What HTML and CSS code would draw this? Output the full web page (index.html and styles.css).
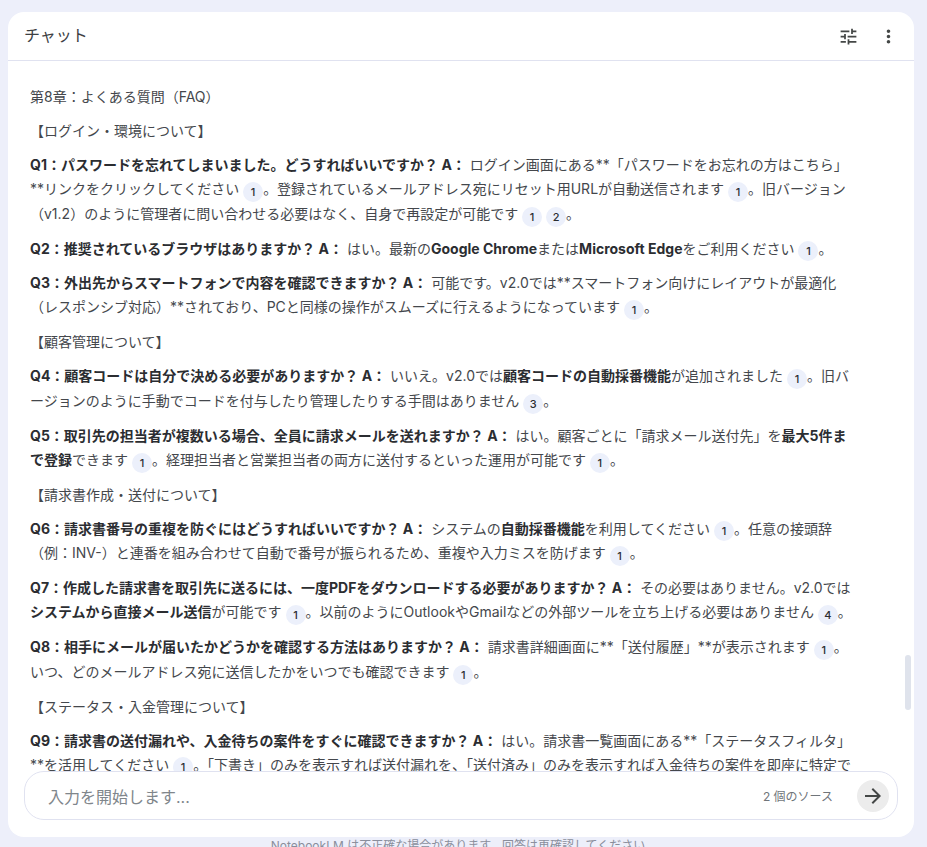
FILE: index.html
```html
<!DOCTYPE html>
<html lang="ja">
<head>
<meta charset="utf-8">
<title>チャット</title>
<link rel="stylesheet" href="styles.css">
</head>
<body>
<main class="card">
  <header class="head">
    <h1 class="title">チャット</h1>
    <div class="tools">
      <svg class="icon" viewBox="0 0 24 24"><path d="M3 17v2h6v-2H3zM3 5v2h10V5H3zm10 16v-2h8v-2h-8v-2h-2v6h2zM7 9v2H3v2h4v2h2V9H7zm14 4v-2H11v2h10zm-6-4h2V7h4V5h-4V3h-2v6z"/></svg>
      <svg class="icon" viewBox="0 0 24 24"><path d="M12 8c1.100 0 2-.9 2-2s-.9-2-2-2-2 .9-2 2 .9 2 2 2zm0 2c-1.100 0-2 .9-2 2s.9 2 2 2 2-.9 2-2-.9-2-2-2zm0 6c-1.100 0-2 .9-2 2s.9 2 2 2 2-.9 2-2-.9-2-2-2z"/></svg>
    </div>
  </header>
  <section class="scroll">
    <div class="thumb"></div>
    <p>第8章：よくある質問（FAQ）</p>
    <p>【ログイン・環境について】</p>
    <p><b>Q1：パスワードを忘れてしまいました。どうすればいいですか？ A：</b> ログイン画面にある**「パスワードをお忘れの方はこちら」**リンクをクリックしてください <span class="cite">1</span>。登録されているメールアドレス宛にリセット用URLが自動送信されます <span class="cite">1</span>。旧バージョン（v1.2）のように管理者に問い合わせる必要はなく、自身で再設定が可能です <span class="cite">1</span> <span class="cite">2</span>。</p>
    <p><b>Q2：推奨されているブラウザはありますか？ A：</b> はい。最新の<b>Google Chrome</b>または<b>Microsoft Edge</b>をご利用ください <span class="cite">1</span>。</p>
    <p><b>Q3：外出先からスマートフォンで内容を確認できますか？ A：</b> 可能です。v2.0では**スマートフォン向けにレイアウトが最適化（レスポンシブ対応）**されており、PCと同様の操作がスムーズに行えるようになっています <span class="cite">1</span>。</p>
    <p>【顧客管理について】</p>
    <p><b>Q4：顧客コードは自分で決める必要がありますか？ A：</b> いいえ。v2.0では<b>顧客コードの自動採番機能</b>が追加されました <span class="cite">1</span>。旧バージョンのように手動でコードを付与したり管理したりする手間はありません <span class="cite">3</span>。</p>
    <p><b>Q5：取引先の担当者が複数いる場合、全員に請求メールを送れますか？ A：</b> はい。顧客ごとに「請求メール送付先」を<b>最大5件まで登録</b>できます <span class="cite">1</span>。経理担当者と営業担当者の両方に送付するといった運用が可能です <span class="cite">1</span>。</p>
    <p>【請求書作成・送付について】</p>
    <p><b>Q6：請求書番号の重複を防ぐにはどうすればいいですか？ A：</b> システムの<b>自動採番機能</b>を利用してください <span class="cite">1</span>。任意の接頭辞（例：INV-）と連番を組み合わせて自動で番号が振られるため、重複や入力ミスを防げます <span class="cite">1</span>。</p>
    <p><b>Q7：作成した請求書を取引先に送るには、一度PDFをダウンロードする必要がありますか？ A：</b> その必要はありません。v2.0では<b>システムから直接メール送信</b>が可能です <span class="cite">1</span>。以前のようにOutlookやGmailなどの外部ツールを立ち上げる必要はありません <span class="cite">4</span>。</p>
    <p><b>Q8：相手にメールが届いたかどうかを確認する方法はありますか？ A：</b> 請求書詳細画面に**「送付履歴」**が表示されます <span class="cite">1</span>。いつ、どのメールアドレス宛に送信したかをいつでも確認できます <span class="cite">1</span>。</p>
    <p>【ステータス・入金管理について】</p>
    <p><b>Q9：請求書の送付漏れや、入金待ちの案件をすぐに確認できますか？ A：</b> はい。請求書一覧画面にある**「ステータスフィルタ」**を活用してください <span class="cite">1</span>。「下書き」のみを表示すれば送付漏れを、「送付済み」のみを表示すれば入金待ちの案件を即座に特定できます <span class="cite">1</span>。</p>
  </section>
  <div class="composer">
    <span class="placeholder">入力を開始します...</span>
    <span class="sources">2 個のソース</span>
    <button class="send" type="button" aria-label="送信">
      <svg viewBox="0 0 24 24"><path d="M12 4l-1.410 1.410L16.170 11H4v2h12.170l-5.580 5.590L12 20l8-8z"/></svg>
    </button>
  </div>
</main>
<footer class="note">NotebookLM は不正確な場合があります。回答は再確認してください。</footer>
</body>
</html>
```
FILE: styles.css
```css
html, body { margin: 0; height: 100%; overflow: hidden; }
body {
  background: #edeffa;
  font-family: Inter, "Noto Sans CJK JP", sans-serif;
  color: #44474c;
  padding: 12px 13px 0 8px;
  box-sizing: border-box;
}
.card {
  height: 825px;
  background: #fff;
  border-radius: 16px;
  display: flex;
  flex-direction: column;
  overflow: hidden;
}
.head {
  flex: none;
  height: 48px;
  border-bottom: 1px solid #e0e2f0;
  display: flex;
  align-items: center;
  justify-content: space-between;
  padding: 0 15px 0 16px;
}
.title { margin: -4px 0 0; font-size: 16px; font-weight: 400; color: #3c4043; }
.tools { display: flex; gap: 19px; }
.icon { width: 21px; height: 21px; fill: #444746; display: block; }
.scroll {
  flex: 1;
  min-height: 0;
  overflow: hidden;
  position: relative;
  padding: 24px 62px 0 22px;
  font-size: 14px;
  line-height: 24px;
}
.scroll p { margin: 0 0 10px; }
.scroll b { font-weight: 700; color: #2b2d31; }
.thumb {
  position: absolute;
  right: 3px;
  top: 594px;
  width: 6px;
  height: 55px;
  border-radius: 3px;
  background: #dfe3ec;
}
.cite {
  display: inline-flex;
  width: 20px;
  height: 20px;
  border-radius: 50%;
  background: #ecf0fb;
  align-items: center;
  justify-content: center;
  font-size: 11px;
  font-weight: 500;
  line-height: 20px;
  color: #2b2d31;
  vertical-align: -1.8px;
}
.composer {
  flex: none;
  height: 47px;
  margin: 0 16px 17px;
  border: 1px solid #e0e2f0;
  border-radius: 20px;
  display: flex;
  align-items: center;
  padding: 0 8px 0 23px;
}
.placeholder { flex: 1; font-size: 16px; color: #80868b; }
.sources { font-size: 12px; color: #70757a; margin-right: 24px; }
.send {
  width: 32px;
  height: 32px;
  padding: 4px;
  border: 0;
  border-radius: 50%;
  background: #ececec;
}
.send svg { display: block; width: 24px; height: 24px; fill: #444746; }
.note {
  text-align: center;
  font-size: 12px;
  line-height: 16px;
  color: #8a8e9c;
  padding: 1px 0 0 6px;
}
```
